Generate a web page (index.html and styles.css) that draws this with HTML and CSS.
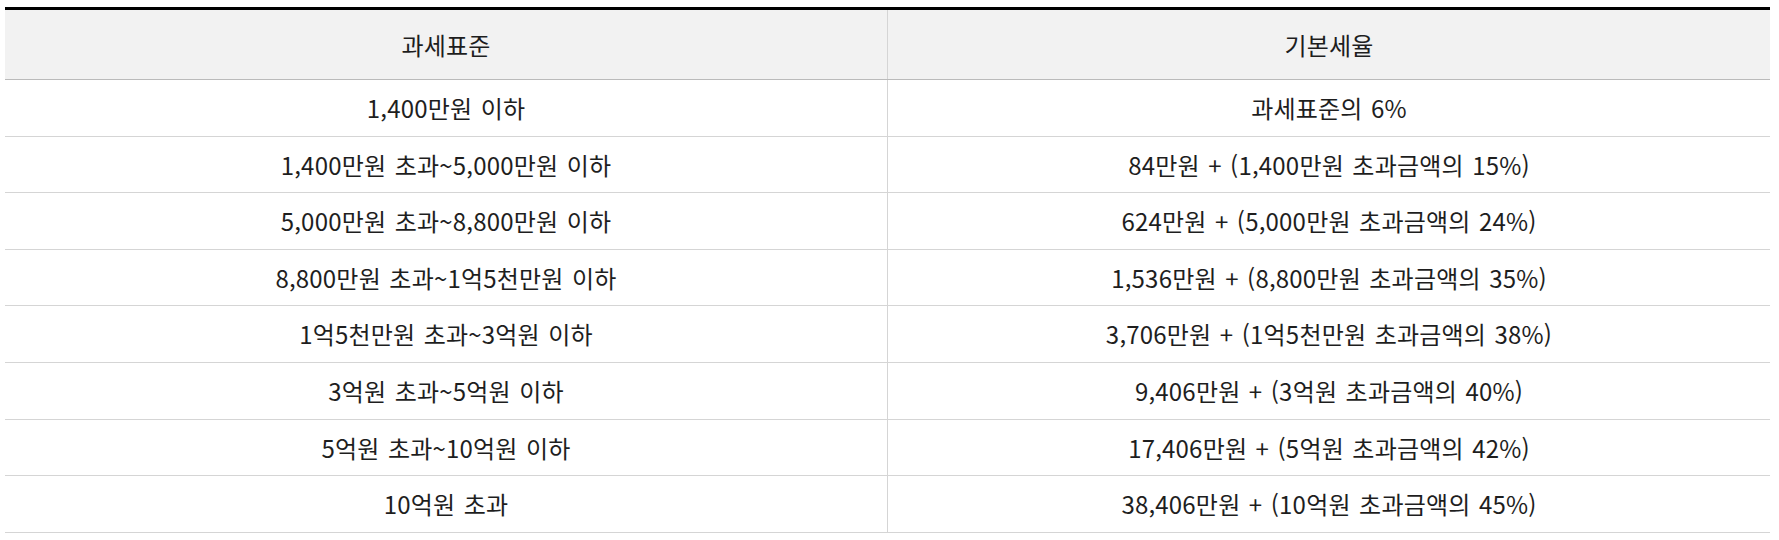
FILE: index.html
```html
<!DOCTYPE html>
<html lang="ko">
<head>
<meta charset="utf-8">
<link rel="stylesheet" href="styles.css">
</head>
<body>
<div class="wrap">
<table class="tax">
<thead>
<tr><th>과세표준</th><th>기본세율</th></tr>
</thead>
<tbody>
<tr><td>1,400만원 이하</td><td>과세표준의 6%</td></tr>
<tr><td>1,400만원 초과~5,000만원 이하</td><td>84만원 + (1,400만원 초과금액의 15%)</td></tr>
<tr><td>5,000만원 초과~8,800만원 이하</td><td>624만원 + (5,000만원 초과금액의 24%)</td></tr>
<tr><td>8,800만원 초과~1억5천만원 이하</td><td>1,536만원 + (8,800만원 초과금액의 35%)</td></tr>
<tr><td>1억5천만원 초과~3억원 이하</td><td>3,706만원 + (1억5천만원 초과금액의 38%)</td></tr>
<tr><td>3억원 초과~5억원 이하</td><td>9,406만원 + (3억원 초과금액의 40%)</td></tr>
<tr><td>5억원 초과~10억원 이하</td><td>17,406만원 + (5억원 초과금액의 42%)</td></tr>
<tr><td>10억원 초과</td><td>38,406만원 + (10억원 초과금액의 45%)</td></tr>
</tbody>
</table>
</div>
</body>
</html>
```
FILE: styles.css
```css
html, body {
  margin: 0;
  background: #fff;
}
.wrap {
  padding: 7px 9px 0 5px;
}
.tax {
  width: 100%;
  border-collapse: collapse;
  table-layout: fixed;
  font-family: "Noto Sans CJK KR", "Noto Sans", sans-serif;
  font-size: 24px;
  color: #1e1e1e;
  border-top: 3px solid #000;
}
.tax th, .tax td {
  width: 50%;
  text-align: center;
  font-weight: normal;
  line-height: 31.6px;
  padding: 0;
  word-spacing: 1.5px;
  letter-spacing: 0.2px;
}
.tax th {
  background: #f2f2f2;
  height: 69px;
  border-bottom: 1px solid #bbbbbb;
}
.tax td {
  height: 55.6px;
  border-bottom: 1px solid #d5d5d5;
}
.tax th + th, .tax td + td {
  border-left: 1px solid #d5d5d5;
}
```
